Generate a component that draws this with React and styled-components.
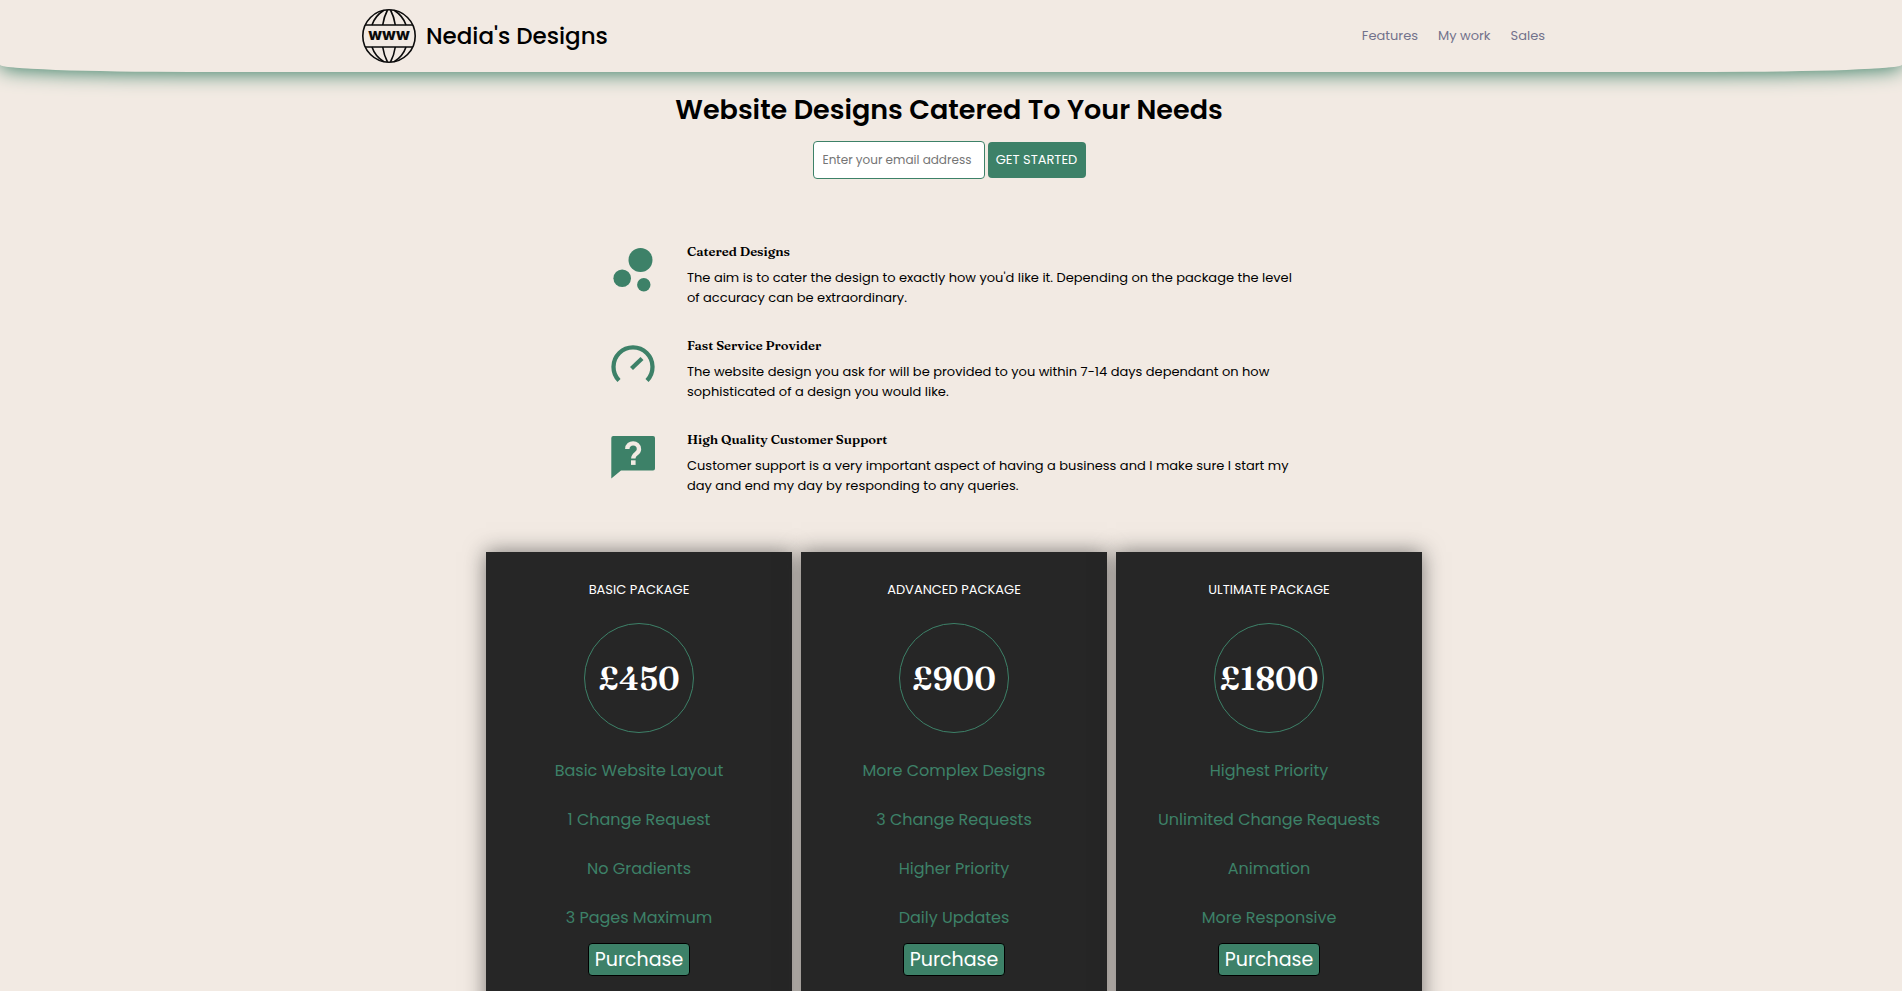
import React from "react";
import styled, { createGlobalStyle } from "styled-components";

const green = "#3d8168";

const GlobalStyle = createGlobalStyle`
  *, *::before, *::after { box-sizing: border-box; }
  body {
    margin: 0;
    background: #f2eae3;
    color: #000;
    font-family: Poppins, Inter, sans-serif;
  }
  h1, h2, h3, p, ul { margin: 0; padding: 0; }
  ul { list-style: none; }
  button, input { font-family: inherit; }
`;

const Header = styled.header`
  height: 72px;
  padding: 0 8px 0 12px;
  display: flex;
  justify-content: center;
  background: #f2eae3;
  border-radius: 0 0 10% 10%;
  box-shadow: 0 2px 20px ${green};
`;

const HeaderInner = styled.div`
  flex: 1;
  max-width: 1184px;
  display: flex;
  align-items: center;
  justify-content: space-between;
`;

const Brand = styled.a`
  display: flex;
  align-items: center;
  gap: 9px;
  color: #000;
  font-size: 23px;
  font-weight: 500;
  line-height: 36px;
  text-decoration: none;
`;

const Nav = styled.nav`
  display: flex;
  gap: 20px;
`;

const NavLink = styled.a`
  color: #72728c;
  font-size: 13px;
  line-height: 20px;
  text-decoration: none;
`;

const Hero = styled.section`
  display: flex;
  flex-direction: column;
  align-items: center;
  gap: 11px;
  padding: 18px 12px 0 8px;
`;

const Title = styled.h1`
  font-size: 27px;
  font-weight: 600;
  line-height: 40px;
`;

const SignUp = styled.form`
  display: flex;
  align-items: center;
  gap: 3px;
`;

const EmailInput = styled.input`
  width: 172px;
  height: 38px;
  padding: 0 9px;
  border: 1px solid ${green};
  border-radius: 4px;
  background: #fff;
  font-size: 12px;
  &::placeholder { color: #757575; }
`;

const StartButton = styled.button`
  width: 98px;
  height: 36px;
  padding: 0;
  border: 0;
  border-radius: 4px;
  background: ${green};
  color: #fff;
  font-size: 13px;
  font-weight: 400;
`;

const Features = styled.section`
  max-width: 686px;
  margin: 0 auto;
  padding: 64px 0 0 3px;
  display: flex;
  flex-direction: column;
  gap: 29px;
`;

const Feature = styled.article`
  display: grid;
  grid-template-columns: 44px 1fr;
  column-gap: 32px;
  align-items: start;
`;

const FeatureIcon = styled.svg`
  width: 44px;
  height: 60px;
  fill: ${green};
`;

const FeatureTitle = styled.h2`
  margin-bottom: 9px;
  font-family: Fraunces, "Liberation Serif", serif;
  font-size: 13px;
  font-weight: 600;
  line-height: 16px;
`;

const FeatureText = styled.p`
  font-size: 13px;
  font-weight: 400;
  line-height: 20px;
`;

const Packages = styled.section`
  display: flex;
  justify-content: center;
  gap: 9px;
  padding: 56px 0 0 6px;
`;

const Card = styled.article`
  width: 306px;
  padding: 28px 10px 40px;
  display: flex;
  flex-direction: column;
  align-items: center;
  background: #262626;
  box-shadow: 0 0 20px rgba(38, 38, 38, 0.6);
`;

const CardTitle = styled.h3`
  color: #fff;
  font-size: 13px;
  font-weight: 400;
  line-height: 20px;
`;

const Price = styled.p`
  width: 110px;
  height: 110px;
  margin: 23px 0 26px;
  display: flex;
  align-items: center;
  justify-content: center;
  border: 1px solid ${green};
  border-radius: 50%;
  color: #fff;
  font-family: Fraunces, "Liberation Serif", serif;
  font-size: 32px;
  font-weight: 600;
`;

const Perks = styled.ul`
  display: flex;
  flex-direction: column;
  gap: 25px;
  margin-bottom: 13px;
`;

const Perk = styled.li`
  color: ${green};
  font-size: 16px;
  line-height: 24px;
  text-align: center;
`;

const PurchaseButton = styled.button`
  width: 102px;
  height: 33px;
  padding: 0;
  border: 1px solid #000;
  border-radius: 4px;
  background: ${green};
  color: #fff;
  font-size: 19px;
  font-weight: 400;
`;

const GlobeLogo = () => (
  <svg width="56" height="56" viewBox="0 0 56 56" fill="none" stroke="#0b0b0b" strokeWidth="1.6" aria-hidden="true">
    <circle cx="28" cy="28" r="26.200" />
    <path d="M4 17h48M4 39h48" />
    <path d="M26.500 2Q23 8.500 21.700 17M29.500 2Q33 8.500 34.300 17M22.500 2.500Q14 8 11 17M33.500 2.500Q42 8 45 17" />
    <path d="M26.500 54Q23 47.500 21.700 39M29.500 54Q33 47.500 34.300 39M22.500 53.500Q14 48 11 39M33.500 53.500Q42 48 45 39" />
    <text x="28" y="32" textAnchor="middle" fill="#0b0b0b" stroke="none" fontFamily="Inter, sans-serif" fontWeight="800" fontSize="16">www</text>
  </svg>
);

const icons = {
  bubbles: (
    <>
      <circle cx="29.500" cy="17" r="12" />
      <circle cx="11.200" cy="35.300" r="8.800" />
      <circle cx="32.800" cy="41.700" r="6.700" />
    </>
  ),
  gauge: (
    <g fill="none" stroke={green} strokeWidth="4.300">
      <path d="M8 43.500A19.500 19.500 0 1 1 36 43.500" />
      <path d="M20.500 31.500L31 21.500" />
    </g>
  ),
  help: (
    <>
      <path d="M2 5H42a2 2 0 0 1 2 2V37.500a2 2 0 0 1-2 2H10L.3 47.500V7a2 2 0 0 1 2-2z" />
      <path d="M16.300 18C16.300 10.500 28 10.500 28 18.300C28 22.800 22.300 22.500 22.300 27.500" fill="none" stroke="#f2eae3" strokeWidth="4.400" />
      <path d="M20 29.300h4.600v4.600h-4.600z" fill="#f2eae3" />
    </>
  ),
};

const features = [
  {
    icon: "bubbles",
    title: "Catered Designs",
    lines: ["The aim is to cater the design to exactly how you'd like it. Depending on the package the level", "of accuracy can be extraordinary."],
  },
  {
    icon: "gauge",
    title: "Fast Service Provider",
    lines: ["The website design you ask for will be provided to you within 7-14 days dependant on how", "sophisticated of a design you would like."],
  },
  {
    icon: "help",
    title: "High Quality Customer Support",
    lines: ["Customer support is a very important aspect of having a business and I make sure I start my", "day and end my day by responding to any queries."],
  },
];

const packages = [
  { name: "BASIC PACKAGE", price: "£450", perks: ["Basic Website Layout", "1 Change Request", "No Gradients", "3 Pages Maximum"] },
  { name: "ADVANCED PACKAGE", price: "£900", perks: ["More Complex Designs", "3 Change Requests", "Higher Priority", "Daily Updates"] },
  { name: "ULTIMATE PACKAGE", price: "£1800", perks: ["Highest Priority", "Unlimited Change Requests", "Animation", "More Responsive"] },
];

export default function App() {
  return (
    <>
      <GlobalStyle />
      <Header>
        <HeaderInner>
          <Brand href="#home">
            <GlobeLogo />
            Nedia's Designs
          </Brand>
          <Nav>
            <NavLink href="#features">Features</NavLink>
            <NavLink href="#work">My work</NavLink>
            <NavLink href="#sales">Sales</NavLink>
          </Nav>
        </HeaderInner>
      </Header>
      <main>
        <Hero>
          <Title>Website Designs Catered To Your Needs</Title>
          <SignUp>
            <EmailInput type="email" aria-label="Email address" placeholder="Enter your email address" />
            <StartButton type="button">GET STARTED</StartButton>
          </SignUp>
        </Hero>
        <Features id="features">
          {features.map((f) => (
            <Feature key={f.title}>
              <FeatureIcon viewBox="0 0 44 60" aria-hidden="true">{icons[f.icon]}</FeatureIcon>
              <div>
                <FeatureTitle>{f.title}</FeatureTitle>
                <FeatureText>
                  {f.lines[0]}
                  <br />
                  {f.lines[1]}
                </FeatureText>
              </div>
            </Feature>
          ))}
        </Features>
        <Packages id="sales">
          {packages.map((p) => (
            <Card key={p.name}>
              <CardTitle>{p.name}</CardTitle>
              <Price>{p.price}</Price>
              <Perks>
                {p.perks.map((perk) => (
                  <Perk key={perk}>{perk}</Perk>
                ))}
              </Perks>
              <PurchaseButton type="button">Purchase</PurchaseButton>
            </Card>
          ))}
        </Packages>
      </main>
    </>
  );
}
